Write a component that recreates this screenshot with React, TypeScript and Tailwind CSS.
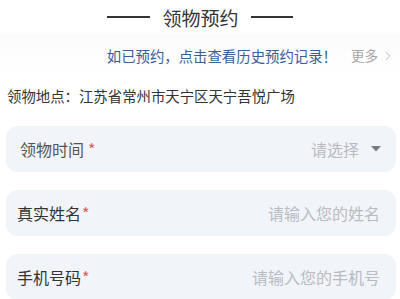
import { ChevronRight } from 'lucide-react';

const fontStack = '"Noto Sans CJK SC", "Noto Sans", sans-serif';

function Field({
  label,
  placeholder,
  select,
}: {
  label: string;
  placeholder: string;
  select?: boolean;
}) {
  return (
    <div
      className={`flex h-[46px] items-center justify-between rounded-[12px] bg-[#f1f4f9] ${
        select ? 'pl-[14px] pr-[15px]' : 'pl-[11px] pr-[16px]'
      }`}
    >
      <div className={`flex items-center text-[16px] ${select ? 'text-[#555]' : 'text-[#333]'}`}>
        <span>{label}</span>
        <span className={`text-[#e25a5a] ${select ? 'ml-[4px]' : 'ml-[1px]'}`}>*</span>
      </div>
      <div className="flex items-center text-[16px] text-[#b8bbc2]">
        <span>{placeholder}</span>
        {select && (
          <svg width="10" height="6" viewBox="0 0 10 6" className="ml-[12px]">
            <path d="M0 0 L10 0 L5 5.5 Z" fill="#777a80" />
          </svg>
        )}
      </div>
    </div>
  );
}

export default function App() {
  return (
    <div className="h-[299px] w-[400px] overflow-hidden bg-white" style={{ fontFamily: fontStack }}>
      <div className="flex h-[34px] items-center justify-center text-[#333]">
        <div className="h-[1.5px] w-[43px] bg-[#333]" />
        <div className="mx-[12px] text-[19px] leading-none">领物预约</div>
        <div className="h-[1.5px] w-[42px] bg-[#333]" />
      </div>
      <div className="bg-gradient-to-b from-[#fbfbfb] to-white">
        <div className="flex h-[42px] items-center justify-end pt-[1px] pr-[5px]">
          <span className="text-[14.4px] text-[#3b5c9c]">如已预约，点击查看历史预约记录！</span>
          <span className="ml-[14px] text-[13.5px] text-[#a8a8a8]">更多</span>
          <ChevronRight size={14} strokeWidth={1.3} className="ml-[3px] text-[#a8a8a8]" />
        </div>
      </div>
      <div className="flex h-[40px] items-center pl-[7px] text-[14.4px] text-[#333]">
        领物地点：江苏省常州市天宁区天宁吾悦广场
      </div>
      <div className="flex flex-col gap-[18px] pl-[6px] pr-[4px] pt-[10px]">
        <Field label="领物时间" placeholder="请选择" select />
        <Field label="真实姓名" placeholder="请输入您的姓名" />
        <Field label="手机号码" placeholder="请输入您的手机号" />
      </div>
    </div>
  );
}
